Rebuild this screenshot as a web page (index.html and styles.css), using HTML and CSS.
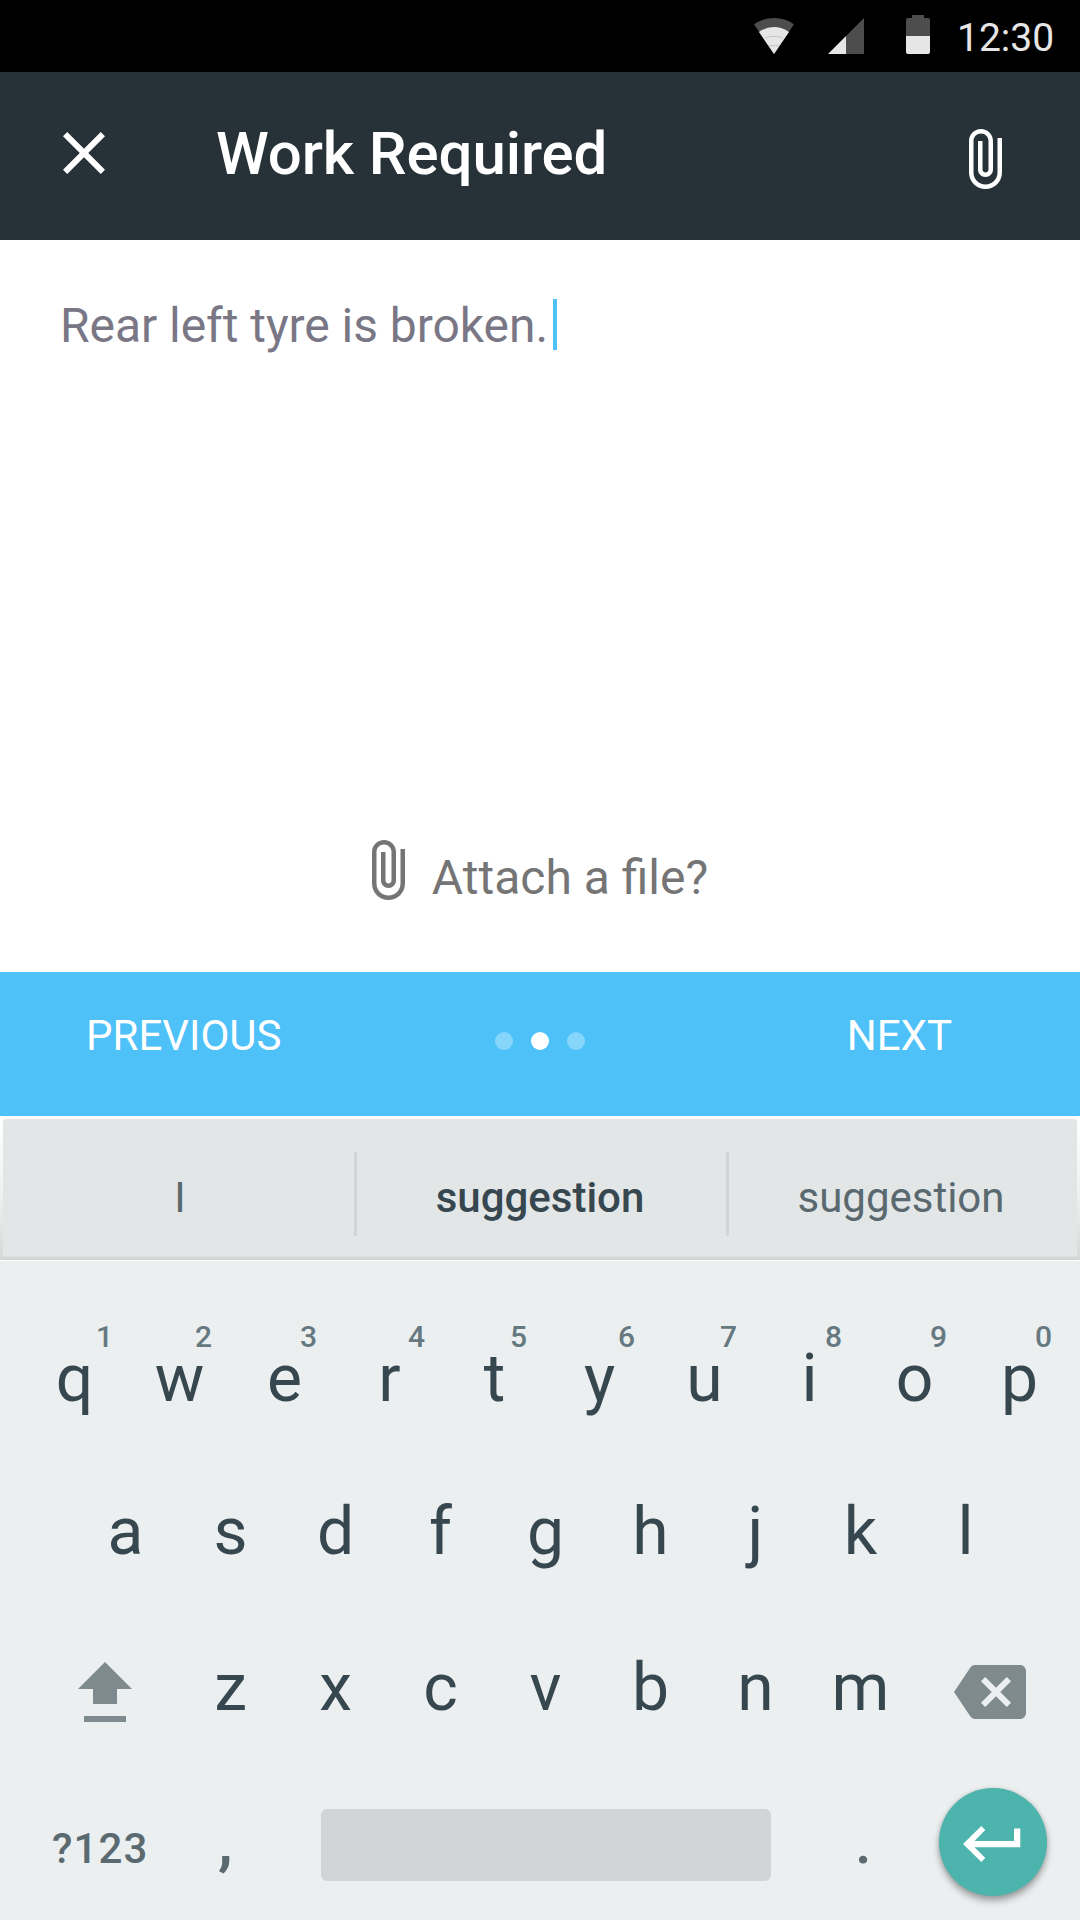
FILE: index.html
```html
<!DOCTYPE html>
<html lang="en">
<head>
<meta charset="utf-8">
<title>Work Required</title>
<link rel="stylesheet" href="styles.css">
</head>
<body>
<svg width="0" height="0" class="defs" aria-hidden="true">
  <symbol id="clip" viewBox="0 0 11 20"><path d="M9.5 3v11.5c0 2.21-1.79 4-4 4s-4-1.79-4-4V4c0-1.38 1.12-2.5 2.5-2.5s2.5 1.12 2.5 2.5v9.5c0 .55-.45 1-1 1s-1-.45-1-1V4H3v9.5c0 1.38 1.12 2.5 2.5 2.5s2.5-1.12 2.5-2.5V4c0-2.21-1.79-4-4-4S0 1.79 0 4v10.5c0 3.04 2.46 5.5 5.5 5.5s5.5-2.46 5.5-5.5V3z"/></symbol>
</svg>
<div class="screen">
  <div class="status">
    <svg class="wifi" width="40" height="36" viewBox="0 0 40 36"><path fill="#4d4d4d" d="M0 6.3Q9 0 20 0t20 6.3L20 36z"/><path fill="#e6e6e6" d="M5 14Q12 9 20 9t15 5L20 36z"/><path fill="none" stroke="#bdbdbd" stroke-width=".8" d="M11 20q9-3.500 18 0M15 27.600h10"/></svg>
    <svg class="signal" width="36" height="36" viewBox="0 0 36 36"><path fill="#4d4d4d" d="M36 0v36H18V18z"/><path fill="#e6e6e6" d="M18 18v18H0z"/></svg>
    <svg class="battery" width="24" height="39" viewBox="0 0 24 39"><path fill="#4d4d4d" d="M6 0h12v3h4a2 2 0 0 1 2 2v16H0V5a2 2 0 0 1 2-2h4z"/><path fill="#e6e6e6" d="M0 21h24v16a2 2 0 0 1-2 2H2a2 2 0 0 1-2-2z"/></svg>
    <span class="time">12:30</span>
  </div>
  <header class="appbar">
    <svg class="close" width="42" height="42" viewBox="5 5 14 14"><path d="M19 6.410L17.590 5 12 10.590 6.410 5 5 6.410 10.590 12 5 17.590 6.410 19 12 13.410 17.590 19 19 17.590 13.410 12z"/></svg>
    <h1 class="title">Work Required</h1>
    <svg class="attach-action" width="33" height="60"><use href="#clip"/></svg>
  </header>
  <main class="content">
    <div class="note"><span>Rear left tyre is broken.</span><i class="caret"></i></div>
    <div class="attach"><svg width="33" height="60"><use href="#clip"/></svg><span>Attach a file?</span></div>
  </main>
  <nav class="pager">
    <span class="prev">PREVIOUS</span>
    <div class="dots"><i class="dot"></i><i class="dot on"></i><i class="dot"></i></div>
    <span class="next">NEXT</span>
  </nav>
  <div class="strip">
    <div class="suggestions">
      <span class="sug first">I</span><span class="sug main">suggestion</span><span class="sug last">suggestion</span>
    </div>
  </div>
  <section class="keyboard">
    <div class="row row1">
      <span class="key">q<sup class="num n1">1</sup></span><span class="key">w<sup class="num">2</sup></span><span class="key">e<sup class="num">3</sup></span><span class="key">r<sup class="num wide">4</sup></span><span class="key">t<sup class="num">5</sup></span><span class="key">y<sup class="num wide">6</sup></span><span class="key">u<sup class="num">7</sup></span><span class="key">i<sup class="num">8</sup></span><span class="key">o<sup class="num">9</sup></span><span class="key">p<sup class="num">0</sup></span>
    </div>
    <div class="row row2">
      <span class="key">a</span><span class="key">s</span><span class="key">d</span><span class="key">f</span><span class="key">g</span><span class="key">h</span><span class="key">j</span><span class="key">k</span><span class="key">l</span>
    </div>
    <div class="row row3">
      <svg class="shift" width="54" height="60" viewBox="0 0 54 60"><path d="M27 0l27 27H39v15H15V27H0zM6 54h42v6H6z"/></svg>
      <span class="key">z</span><span class="key">x</span><span class="key">c</span><span class="key">v</span><span class="key">b</span><span class="key">n</span><span class="key">m</span>
      <svg class="backspace" width="72" height="54" viewBox="0 3 24 18"><path d="M22 3H7c-.69 0-1.230.350-1.590.880L0 12l5.410 8.110c.360.530.900.890 1.590.890h15c1.100 0 2-.900 2-2V5c0-1.100-.900-2-2-2zm-3 12.590L17.590 17 14 13.410 10.410 17 9 15.590 12.590 12 9 8.410 10.410 7 14 10.590 17.590 7 19 8.410 15.410 12 19 15.590z"/></svg>
    </div>
    <div class="row row4">
      <span class="symbols">?123</span>
      <span class="punct comma">,</span>
      <div class="space"></div>
      <span class="punct period">.</span>
      <div class="enter"><svg width="58" height="36" viewBox="0 0 58 36"><path d="M0 18L18.300 0l4 4L11.500 15H51V2.600h6.300V21.300H11.500L22.300 32l-4 4z"/></svg></div>
    </div>
  </section>
</div>
</body>
</html>
```
FILE: styles.css
```css
* { box-sizing: border-box; }
body { margin: 0; font-family: Roboto, "Liberation Sans", sans-serif; }
svg { display: block; flex: none; }
.defs { position: absolute; }
.screen { width: 1080px; height: 1920px; display: flex; flex-direction: column; background: #fff; overflow: hidden; }
.screen span, .title { white-space: nowrap; }

.status { height: 72px; background: #000; display: flex; align-items: flex-start; padding-left: 754px; }
.wifi { margin-top: 18px; }
.signal { margin: 18px 0 0 34px; }
.battery { margin: 15px 0 0 42px; }
.time { margin: 15px 0 0 27px; font-size: 39px; line-height: 46px; color: #e6e6e6; }

.appbar { height: 168px; background: #273238; color: #fff; fill: #fff; display: flex; align-items: flex-start; padding: 0 78px 0 63px; }
.close { margin-top: 60px; }
.title { margin: 46px auto 0 111px; font-size: 60px; line-height: 72px; font-weight: 500; letter-spacing: -.1px; }
.attach-action { margin-top: 57px; }

.content { height: 732px; display: flex; flex-direction: column; justify-content: space-between; padding: 58px 60px 66px; font-size: 48px; line-height: 56px; }
.note { display: flex; color: #797785; letter-spacing: -.05px; }
.caret { width: 4px; height: 51px; margin: 1px 0 0 5px; background: #4fc1f9; }
.attach { display: flex; justify-content: center; gap: 27px; color: #757575; fill: #757575; }
.attach span { margin-top: 10px; }

.pager { height: 144px; background: #4fc1f9; color: #fff; display: grid; grid-template-columns: 1fr 90px 1fr; align-items: start; font-size: 42px; line-height: 48px; }
.prev { margin: 40px 0 0 86px; }
.next { margin: 40px 128px 0 0; text-align: right; }
.dots { display: flex; justify-content: space-between; margin-top: 60px; }
.dot { width: 18px; height: 18px; border-radius: 50%; background: #86d5fb; }
.dot.on { background: #fff; }

.strip { height: 145px; padding: 3px 3px 0; background: linear-gradient(#fff, #f2f2f2 50%, #d8d8d8); border-bottom: 1px solid #fff; }
.suggestions { height: 141px; display: flex; align-items: flex-start; padding-top: 33px; border-radius: 3px 3px 0 0; background: linear-gradient(#e2e6e6 0 136px, #dadddd 138px, #cfd0d0 141px); color: #5a696f; font-size: 42px; line-height: 48px; text-align: center; }
.sug { height: 84px; padding-top: 22px; }
.first { width: 354px; padding-left: 3px; border-right: 3px solid #d1d5d6; }
.main { width: 372px; padding-right: 3px; border-right: 3px solid #d1d5d6; font-weight: 500; color: #37474f; }
.last { width: 348px; padding-right: 4px; }

.keyboard { height: 659px; background: #ebeff0; display: flex; flex-direction: column; color: #37474f; }
.row { display: flex; align-items: flex-start; }
.key { position: relative; width: 105px; margin-top: 1px; text-align: center; font-size: 66px; line-height: 78px; }
.num { position: absolute; left: 68px; top: -21px; font-size: 30px; line-height: 36px; font-weight: 500; color: #667981; }
.num.n1 { left: 74px; }
.num.wide { left: 71px; }
.row1 { height: 231px; padding: 78px 0 0 22px; }
.row2 { height: 156px; padding-left: 73px; }
.row3 { height: 161px; padding-left: 78px; fill: #7f8a8f; }
.shift { margin: 14px 46px 0 0; }
.backspace { margin: 17px 0 0 41px; }
.row4 { color: #5b6a70; font-weight: 500; }
.symbols { width: 164px; margin: 16px 0 0 52px; font-size: 42px; line-height: 48px; letter-spacing: 1.1px; }
.punct { font-size: 60px; line-height: 66px; }
.comma { width: 105px; margin-top: 1px; padding-left: 2px; font-weight: 700; }
.space { width: 450px; height: 72px; background: #d1d5d8; border-radius: 6px; }
.period { width: 84px; margin: 1px 0 0 84px; }
.enter { width: 108px; height: 108px; margin-top: -21px; border-radius: 50%; background: #4cb4ac; fill: #fff; padding: 38px 0 0 24px; box-shadow: 0 5px 7px rgba(0,0,0,.32), 0 0 4px rgba(0,0,0,.12); }
```
